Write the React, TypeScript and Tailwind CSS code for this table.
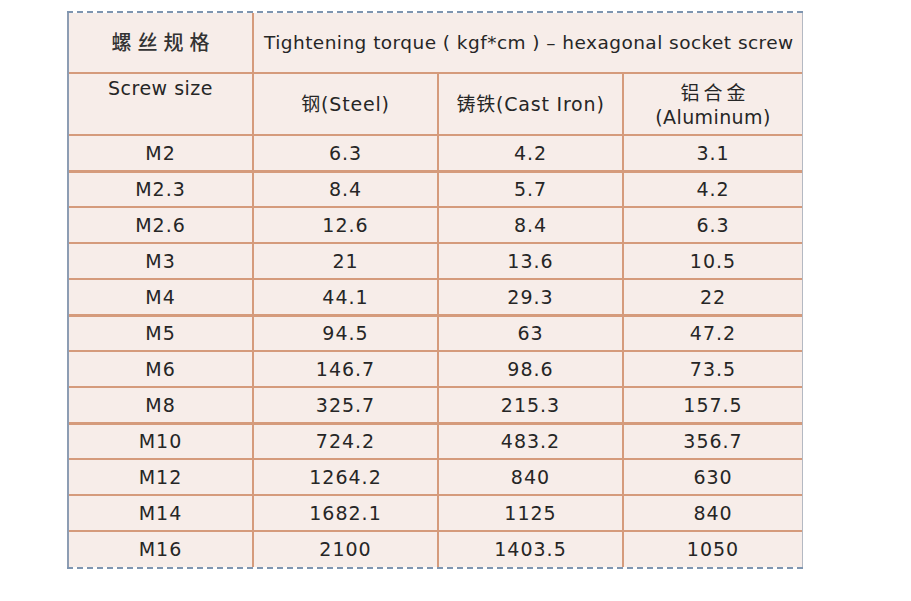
const rows: [string, string, string, string][] = [
  ['M2', '6.3', '4.2', '3.1'],
  ['M2.3', '8.4', '5.7', '4.2'],
  ['M2.6', '12.6', '8.4', '6.3'],
  ['M3', '21', '13.6', '10.5'],
  ['M4', '44.1', '29.3', '22'],
  ['M5', '94.5', '63', '47.2'],
  ['M6', '146.7', '98.6', '73.5'],
  ['M8', '325.7', '215.3', '157.5'],
  ['M10', '724.2', '483.2', '356.7'],
  ['M12', '1264.2', '840', '630'],
  ['M14', '1682.1', '1125', '840'],
  ['M16', '2100', '1403.5', '1050'],
];

// rows whose bottom rule is drawn heavier in the scan
const heavy = new Set([0, 4, 7]);

const cell = 'border-[#d59b7c] text-center align-middle';

export default function App() {
  return (
    <div className="w-[911px] h-[601px] bg-white overflow-hidden pt-[11px] pl-[67px]" style={{ fontFamily: '"DejaVu Sans", "Noto Sans CJK SC", sans-serif' }}>
      <div className="w-[736px]">
        <div className="h-0 border-t-2 border-dashed border-[#7f95b0]" />
        <div className="border-l-2 border-l-[#8d9db3] border-r border-r-[#b4b9c3] bg-[#f7ede9]">
          <table className="table-fixed border-collapse w-full text-[#262626]">
            <colgroup>
              <col className="w-[184px]" />
              <col className="w-[185px]" />
              <col className="w-[185px]" />
              <col className="w-[179px]" />
            </colgroup>
            <tbody>
              <tr className="h-[60px]">
                <td className={`${cell} border-r-2 border-b-2 text-[20px] tracking-[6px] pl-[6px] font-medium text-[#333]`}>螺丝规格</td>
                <td colSpan={3} className={`${cell} border-b-2 text-left pl-[10px] text-[18.5px] tracking-[0.45px] whitespace-nowrap`}>
                  Tightening torque ( kgf*cm ) – hexagonal socket screw
                </td>
              </tr>
              <tr className="h-[62px]">
                <td className={`${cell} border-r-2 border-b-2 !align-top pt-0 text-[19px] tracking-[0.5px]`}>Screw size</td>
                <td className={`${cell} border-r-2 border-b-2 text-[19px] tracking-[0.8px]`}>钢(Steel)</td>
                <td className={`${cell} border-r-2 border-b-2 text-[19px] tracking-[0.8px]`}>铸铁(Cast Iron)</td>
                <td className={`${cell} border-b-2 text-[19px] leading-[24px] pt-[2px]`}>
                  <div className="tracking-[4px] pl-[4px]">铝合金</div>
                  <div className="tracking-[0.4px]">(Aluminum)</div>
                </td>
              </tr>
              {rows.map((r, i) => (
                <tr key={r[0]} className="h-[36px]">
                  {r.map((v, j) => (
                    <td
                      key={j}
                      className={`${cell} text-[19px] tracking-[1px] ${j < 3 ? 'border-r-2' : ''} ${i < rows.length - 1 ? (heavy.has(i) ? 'border-b-[3px]' : 'border-b-2') : ''}`}
                    >
                      {v}
                    </td>
                  ))}
                </tr>
              ))}
            </tbody>
          </table>
        </div>
        <div className="h-0 border-t-2 border-dashed border-[#7f95b0]" />
      </div>
    </div>
  );
}
